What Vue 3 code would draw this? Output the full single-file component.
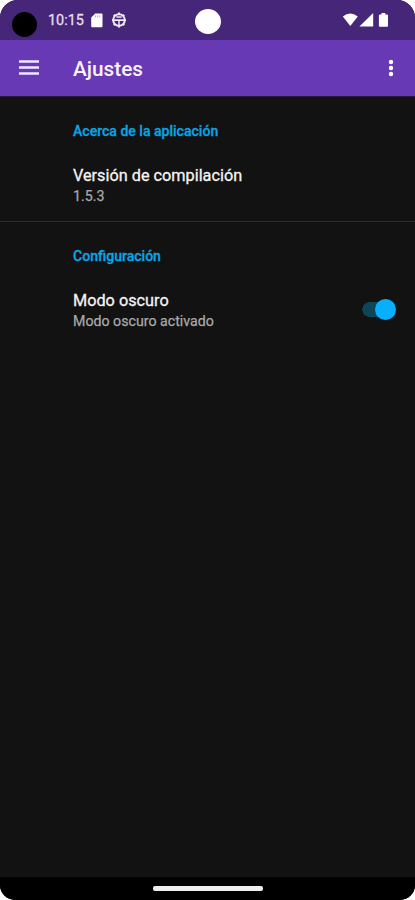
<script setup>
import { ref } from 'vue'

const version = '1.5.3'
const dark = ref(true)
</script>

<template>
  <div class="phone">
    <header class="status">
      <span class="lens"></span>
      <span class="clock">10:15</span>
      <svg class="sd" viewBox="0 0 12 15"><path d="M4.2 0.5H10.5Q11.5 0.5 11.5 1.5V13.3Q11.5 14.3 10.5 14.3H1.2Q0.2 14.3 0.2 13.3V4.4Z" fill="#fff" /><path d="M4.4 2.4V4.4M6.6 2.4V4.4M8.8 2.4V4.4" stroke="#b5a8cc" stroke-width="1" /></svg>
      <svg class="globe" viewBox="0 0 16 16" fill="none" stroke="#eee9f5">
        <circle cx="8" cy="8" r="5.8" stroke-width="2" />
        <path d="M1 8.2H15" stroke-width="1.8" />
        <path d="M5.3 5H10.7M8 8V14" stroke-width="1.5" />
        <path d="M8 0.6V2.5M8 13.5V15.4M2.8 2.8L4 4M13.2 2.8L12 4M2.8 13.2L4 12M13.2 13.2L12 12" stroke-width="2" />
      </svg>
      <span class="camera"></span>
      <svg class="signals" viewBox="0 0 46 16" fill="#fff">
        <path d="M0.8 4.6Q8.2-1.4 15.8 4.6L8.3 14Z" />
        <path d="M31.2 1V14.6H17.4Z" />
        <path d="M37.9 2.4H39.5V1H43.3V2.4H45Q46 2.4 46 3.4V13.8Q46 14.8 45 14.8H37.9Q36.9 14.8 36.9 13.8V3.4Q36.9 2.4 37.9 2.4Z" />
      </svg>
    </header>
    <nav class="toolbar">
      <svg class="menu" viewBox="0 0 20 15" stroke="#f0e8fa" stroke-width="2.4"><path d="M0 1.5H20M0 7.5H20M0 13.5H20" /></svg>
      <h1>Ajustes</h1>
      <svg class="more" viewBox="0 0 6 18" fill="#fff"><circle cx="3" cy="3" r="2.2" /><circle cx="3" cy="9" r="2.2" /><circle cx="3" cy="15" r="2.2" /></svg>
    </nav>
    <main>
      <section class="about">
        <h2>Acerca de la aplicación</h2>
        <div class="row">
          <div>
            <p class="title">Versión de compilación</p>
            <p class="sub">{{ version }}</p>
          </div>
        </div>
      </section>
      <section>
        <h2>Configuración</h2>
        <div class="row">
          <div>
            <p class="title">Modo oscuro</p>
            <p class="sub">Modo oscuro {{ dark ? 'activado' : 'desactivado' }}</p>
          </div>
          <button class="switch" :class="{ on: dark }" role="switch" :aria-checked="dark" @click="dark = !dark"><span></span></button>
        </div>
      </section>
    </main>
    <footer><span></span></footer>
  </div>
</template>

<style>
body { background: #fff; }
</style>

<style scoped>
* { box-sizing: border-box; }
h1, h2, p { margin: 0; }
.phone {
  width: 415px; height: 900px; overflow: hidden;
  display: flex; flex-direction: column;
  background: #121212; border-radius: 18px 18px 15px 15px;
  font-family: Roboto, sans-serif;
}
.status { position: relative; height: 40px; flex: none; display: flex; align-items: flex-start; background: #452678; }
.lens { width: 25px; height: 25px; margin: 12px 0 0 12px; border-radius: 50%; background: #000; }
.clock { margin: 11px 0 0 11px; width: 36px; font-size: 14.4px; line-height: 20px; color: #e5dff0; -webkit-text-stroke: 0.3px #e5dff0; white-space: nowrap; }
.sd { width: 12px; height: 15px; margin: 13px 0 0 7px; }
.globe { width: 16px; height: 16px; margin: 12px 0 0 8px; }
.camera { position: absolute; left: 195px; top: 9px; width: 26px; height: 25px; border-radius: 50%; background: #fff; }
.signals { width: 46px; height: 16px; margin: 12px 27px 0 auto; }
.toolbar { height: 57px; flex: none; display: flex; align-items: center; padding: 0 21px 1px 19px; background: #6739b4; border-bottom: 1px solid #291840; }
.menu { width: 20px; height: 15px; }
h1 { margin-left: 34px; font-size: 20.8px; line-height: 24px; font-weight: 500; color: #f7f2fc; padding-top: 2px; }
.more { width: 6px; height: 18px; margin-left: auto; }
main { flex: 1; }
section { height: 124px; padding: 24px 19px 0 73px; }
.about { height: 125px; border-bottom: 1px solid #2d2d2d; }
h2 { font-size: 14.05px; line-height: 20px; font-weight: 500; color: #0ca4e2; -webkit-text-stroke: 0.3px #0ca4e2; }
.row { display: flex; justify-content: space-between; align-items: flex-start; margin-top: 24px; }
.title { font-size: 16.25px; line-height: 22px; color: #f4f4f4; -webkit-text-stroke: 0.3px #f4f4f4; }
.sub { font-size: 14.2px; line-height: 20px; margin-top: -1px; color: #a9a9a9; -webkit-text-stroke: 0.25px #a9a9a9; }
.switch { width: 34px; height: 21px; margin-top: 9px; padding: 0; border: 0; display: flex; align-items: center; background: linear-gradient(#444, #444) 0 50% / 30px 15px no-repeat; border-radius: 11px; }
.switch span { width: 21px; height: 21px; border-radius: 50%; background: #bbb; }
.switch.on { justify-content: flex-end; background: radial-gradient(circle at 7.5px 50%, #0e4658 7px, transparent 7.5px), linear-gradient(#0e4658, #0e4658) 7px 50% / 16px 15px no-repeat; }
.switch.on span { background: #06b0ff; }
footer { height: 23px; flex: none; display: flex; justify-content: center; background: #000; }
footer span { width: 110px; height: 5px; margin-top: 9px; border-radius: 2px; background: #eee; }
</style>
